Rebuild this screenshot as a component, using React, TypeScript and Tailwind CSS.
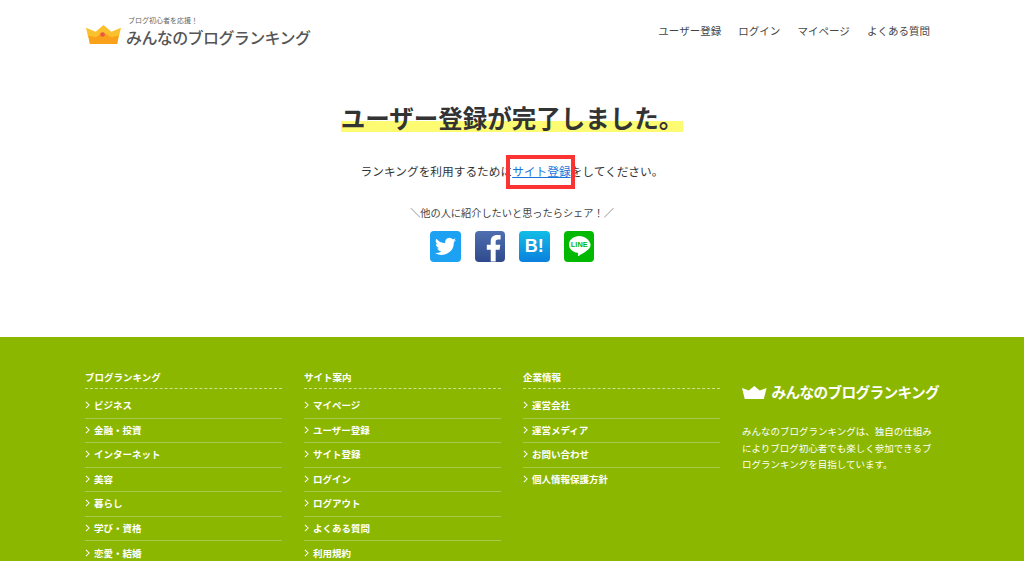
import React from 'react';

const FONT = "font-['Noto_Sans_CJK_JP','Noto_Sans',sans-serif]";

const columns = [
  { title: 'ブログランキング', links: ['ビジネス', '金融・投資', 'インターネット', '美容', '暮らし', '学び・資格', '恋愛・結婚'] },
  { title: 'サイト案内', links: ['マイページ', 'ユーザー登録', 'サイト登録', 'ログイン', 'ログアウト', 'よくある質問', '利用規約'] },
  { title: '企業情報', links: ['運営会社', '運営メディア', 'お問い合わせ', '個人情報保護方針'] },
];

const Crown = ({ white = false }: { white?: boolean }) => (
  <svg viewBox="0 0 36 20" preserveAspectRatio="none" className={white ? 'w-[25px] h-[13px]' : 'w-[35px] h-[19px] mb-[4px]'}>
    <path d="M0 3 L10 7 L18 0 L26 7 L36 3 L32 20 L4 20 Z" fill={white ? '#ffffff' : '#fbc02d'} />
    {!white && <path d="M2.500 11 L10 13 L18 8 L26 13 L33.500 11 L32 20 L4 20 Z" fill="#f9a11b" />}
    {!white && <circle cx="17" cy="10" r="2.400" fill="#e8573f" />}
  </svg>
);

const App = () => {
  return (
    <div className={`${FONT} w-[1024px] h-[561px] overflow-hidden bg-white text-[#333]`}>
      <header className="h-[60px] pl-[86px] pr-[94px] flex items-start justify-between">
        <div className="flex items-end pt-[14px]">
          <Crown />
          <div className="ml-[5px] flex flex-col">
            <span className="text-[7px] leading-[12px] text-[#666] ml-[2px]">ブログ初心者を応援！</span>
            <span className="text-[16px] leading-[22px] font-medium text-[#555] tracking-[-0.6px]">みんなのブログランキング</span>
          </div>
        </div>
        <nav className="flex gap-[17.200px] text-[10.500px] leading-[16px] pt-[23px] text-[#444]">
          <a>ユーザー登録</a>
          <a>ログイン</a>
          <a>マイページ</a>
          <a>よくある質問</a>
        </nav>
      </header>

      <main className="h-[277px] flex flex-col items-center">
        <h1 className="mt-[40px] h-[32px] pt-[2px] text-[24.500px] leading-[32px] font-bold text-[#333] bg-[linear-gradient(transparent_65%,#fdfb72_65%)]">
          ユーザー登録が完了しました。
        </h1>
        <p className="mt-[30px] text-[11.700px] leading-[18px] relative">
          ランキングを利用するために
          <a className="text-[#1a73d9] underline">サイト登録</a>
          をしてください。
          <span className="absolute left-[145px] top-[-7px] w-[69px] h-[34px] border-[4px] border-[#fb3333]" />
        </p>
        <p className="mt-[25px] text-[10.200px] leading-[16px] text-[#444]">＼他の人に紹介したいと思ったらシェア！／</p>
        <div className="mt-[10px] flex gap-[14px]">
          <div className="w-[30.500px] h-[30.500px] rounded-[4px] bg-[#1da1f2] flex items-center justify-center">
            <svg viewBox="0 0 24 24" className="w-[23px] h-[23px]" fill="#fff">
              <path d="M23 5.1c-.8.4-1.7.6-2.6.7.9-.6 1.7-1.4 2-2.5-.9.5-1.9.9-2.9 1.1a4.5 4.5 0 0 0-7.7 4.1C8 8.3 4.700 6.500 2.500 3.800a4.500 4.500 0 0 0 1.400 6c-.7 0-1.400-.2-2-.6 0 2.200 1.500 4 3.600 4.500-.7.2-1.400.2-2 .1.600 1.800 2.200 3.100 4.200 3.100A9.100 9.100 0 0 1 1 18.800 12.800 12.800 0 0 0 20.700 7.400c.9-.6 1.700-1.400 2.300-2.300z" />
            </svg>
          </div>
          <div className="w-[30.500px] h-[30.500px] rounded-[4px] bg-[linear-gradient(#4f6fb0,#2f4a8c)] overflow-hidden">
            <svg viewBox="0 0 31 31" className="w-full h-full" fill="#fff">
              <path d="M21 31V19h4l.7-5H21v-3c0-1.500.5-2.400 2.500-2.400H26V4.200C25.500 4.100 24 4 22.300 4 18.700 4 16 6.200 16 10.300V14h-4v5h4v12z" />
            </svg>
          </div>
          <div className="w-[30.500px] h-[30.500px] rounded-[4px] bg-[linear-gradient(#12bde6,#0a80de)] flex items-center justify-center text-white text-[18px] font-bold font-['Liberation_Sans',sans-serif]">
            B!
          </div>
          <div className="w-[30.500px] h-[30.500px] rounded-[4px] bg-[#00b900]">
            <svg viewBox="0 0 31 31" className="w-full h-full">
              <path d="M15.500 5C9.700 5 5 8.800 5 13.600c0 4.300 3.700 7.800 8.800 8.500.8.200.5 1.500.3 2.600-.1.700.5.800 1.100.5 2.200-1.200 8.800-5.100 10.300-7.300 1-1.300 1.500-2.700 1.500-4.300C26 8.800 21.300 5 15.500 5z" fill="#fff" />
              <text x="15.500" y="16.500" textAnchor="middle" fontSize="7.500" fontWeight="700" fill="#00b900" fontFamily="Liberation Sans, sans-serif">LINE</text>
            </svg>
          </div>
        </div>
      </main>

      <footer className="h-[224px] bg-[#8bb700] text-white pl-[85px] flex overflow-hidden pt-[33px]">
        {columns.map((col) => (
          <div key={col.title} className="w-[197px] mr-[22px] shrink-0">
            <h4 className="text-[9.500px] leading-[16px] font-bold -mt-[1px] pb-[3px] border-b border-dashed border-[#cfe08f]">{col.title}</h4>
            <ul className="mt-[5px]">
              {col.links.map((link) => (
                <li key={link} className="h-[24.500px] pb-[1px] flex items-center border-b border-[#a9cb4d] last:border-0 text-[9.500px] font-bold">
                  <svg viewBox="0 0 6 10" className="w-[5px] h-[8px] mr-[4px]" fill="none" stroke="#fff" strokeWidth="1.300">
                    <path d="M1 1l4 4-4 4" />
                  </svg>
                  {link}
                </li>
              ))}
            </ul>
          </div>
        ))}
        <div className="w-[197px] shrink-0">
          <div className="flex items-center mt-[12px]">
            <Crown white />
            <span className="ml-[5px] text-[14.700px] leading-[20px] font-bold tracking-[-0.7px] whitespace-nowrap">みんなのブログランキング</span>
          </div>
          <p className="mt-[21px] text-[9.500px] leading-[16.500px] w-[195px]">
            みんなのブログランキングは、独自の仕組みによりブログ初心者でも楽しく参加できるブログランキングを目指しています。
          </p>
        </div>
      </footer>
    </div>
  );
};

export default App;
